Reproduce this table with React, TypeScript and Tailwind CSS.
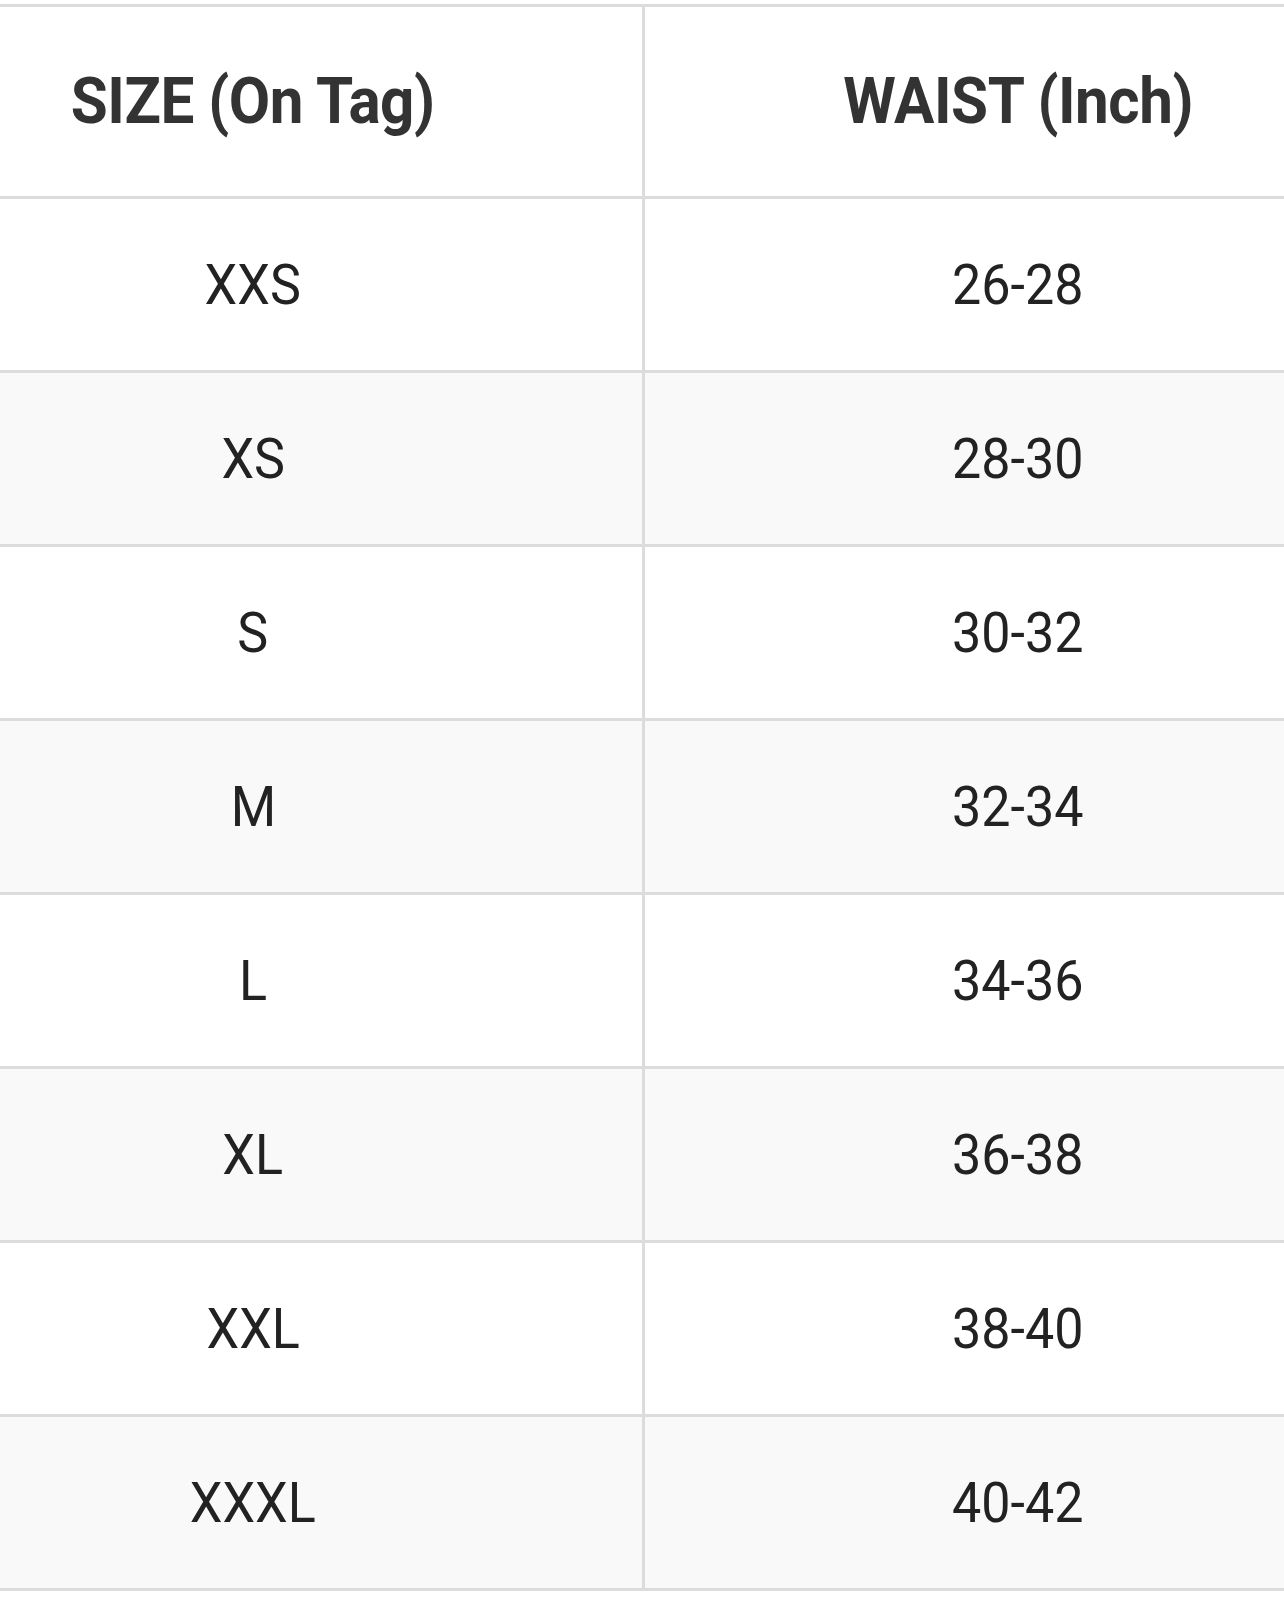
const rows = [
  ['XXS', '26-28'],
  ['XS', '28-30'],
  ['S', '30-32'],
  ['M', '32-34'],
  ['L', '34-36'],
  ['XL', '36-38'],
  ['XXL', '38-40'],
  ['XXXL', '40-42'],
]

export default function App() {
  return (
    <div className="w-[1284px] h-[1604px] overflow-hidden bg-white pt-[4px]" style={{ fontFamily: 'Roboto, "Noto Sans", sans-serif' }}>
      <div className="border-t-[3px] border-[#dcdcdc]">
        {/* header */}
        <div className="flex h-[192px] border-b-[3px] border-[#dcdcdc] bg-white">
          <div className="w-[645px] shrink-0 border-r-[3px] border-[#dcdcdc] pr-[136px] flex items-center justify-center">
            <span className="inline-block scale-x-[0.925] text-[65px] font-bold text-[#333333] tracking-[-0.5px]">SIZE (On Tag)</span>
          </div>
          <div className="flex-1 pl-[107px] flex items-center justify-center">
            <span className="inline-block scale-x-[0.925] text-[65px] font-bold text-[#333333] tracking-[-0.5px]">WAIST (Inch)</span>
          </div>
        </div>

        {rows.map(([size, waist], i) => (
          <div
            key={size}
            className={`flex h-[174px] border-b-[3px] border-[#dcdcdc] ${i % 2 === 1 ? 'bg-[#f9f9f9]' : 'bg-white'}`}
          >
            <div className="w-[645px] shrink-0 border-r-[3px] border-[#dcdcdc] pr-[136px] flex items-center justify-center">
              <span className="inline-block scale-x-[0.93] text-[56px] text-[#222222]">{size}</span>
            </div>
            <div className="flex-1 pl-[107px] flex items-center justify-center">
              <span className="inline-block scale-x-[0.93] text-[56px] text-[#222222]">{waist}</span>
            </div>
          </div>
        ))}
      </div>
    </div>
  )
}
